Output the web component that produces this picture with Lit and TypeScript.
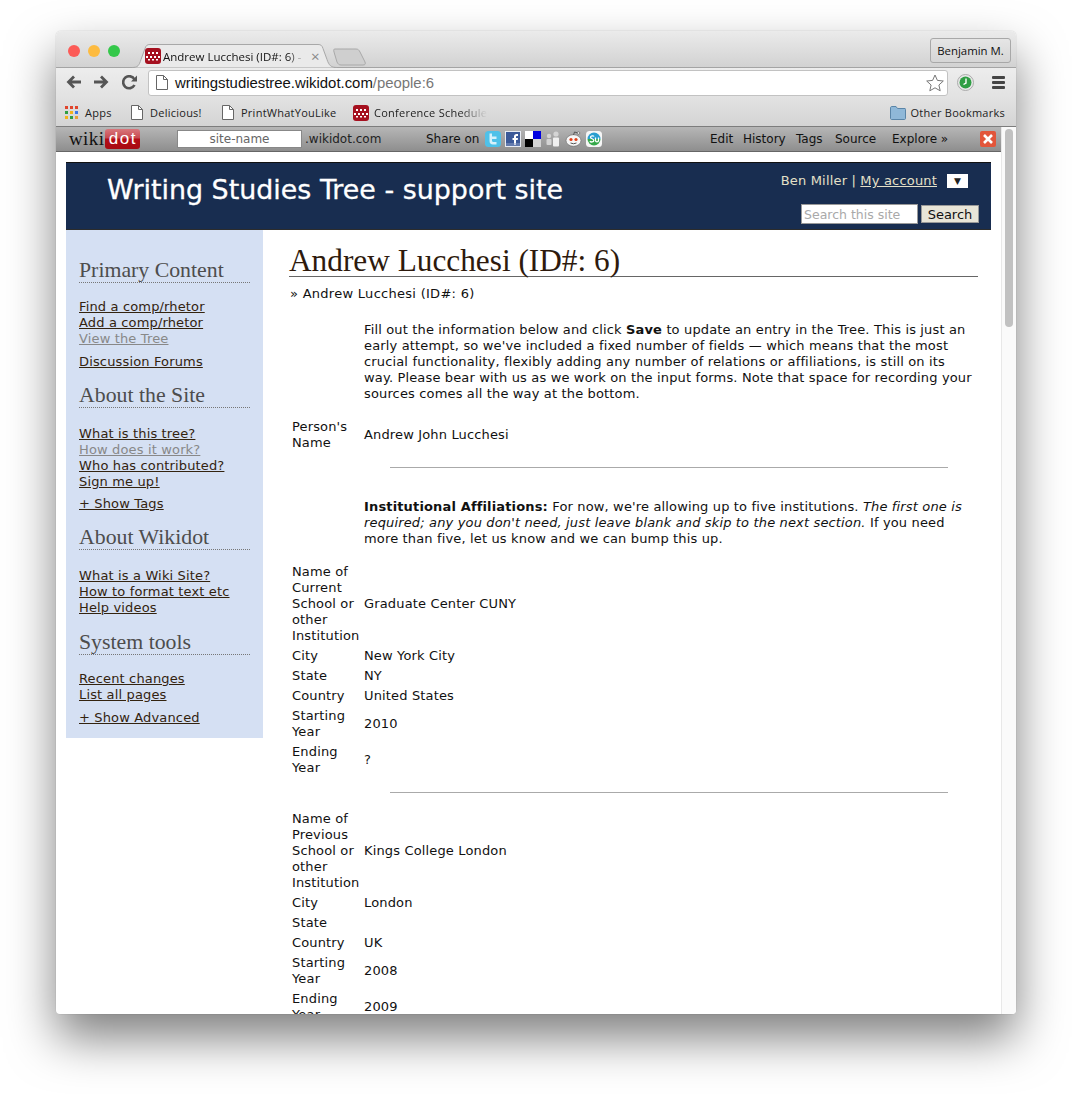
import { LitElement, css, html } from 'lit';
import { customElement } from 'lit/decorators.js';

const favicon = html`<svg class="fav" width="16" height="16" viewBox="0 0 16 16">
  <rect width="16" height="16" rx="3" fill="#a5101f" />
  <g fill="#fff">
    <rect x="3" y="4" width="2" height="2" /><rect x="7" y="4" width="2" height="2" /><rect x="11" y="4" width="2" height="2" />
    <rect x="1" y="8" width="2" height="2" /><rect x="5" y="8" width="2" height="2" /><rect x="9" y="8" width="2" height="2" /><rect x="13" y="8" width="2" height="2" />
    <rect x="3" y="11" width="2" height="1.5" /><rect x="7" y="11" width="2" height="1.5" /><rect x="11" y="11" width="2" height="1.5" />
  </g>
</svg>`;

const doc = html`<svg width="12" height="15" viewBox="0 0 12 15" fill="#fff" stroke="#666">
  <path d="M.5.5h7l4 4v10H.5z" /><path d="M7.5.5v4h4" fill="none" />
</svg>`;

const affiliations = [
  [
    ['Name of Current School or other Institution', 'Graduate Center CUNY'],
    ['City', 'New York City'],
    ['State', 'NY'],
    ['Country', 'United States'],
    ['Starting Year', '2010'],
    ['Ending Year', '?'],
  ],
  [
    ['Name of Previous School or other Institution', 'Kings College London'],
    ['City', 'London'],
    ['State', ''],
    ['Country', 'UK'],
    ['Starting Year', '2008'],
    ['Ending Year', '2009'],
  ],
];

const nav = [
  {
    title: 'Primary Content',
    groups: [['Find a comp/rhetor', 'Add a comp/rhetor', '~View the Tree'], ['Discussion Forums']],
  },
  {
    title: 'About the Site',
    groups: [['What is this tree?', '~How does it work?', 'Who has contributed?', 'Sign me up!'], ['+ Show Tags']],
  },
  { title: 'About Wikidot', groups: [['What is a Wiki Site?', 'How to format text etc', 'Help videos']] },
  { title: 'System tools', groups: [['Recent changes', 'List all pages'], ['+ Show Advanced']] },
];

@customElement('app-root')
export class AppRoot extends LitElement {
  static styles = css`
    :host {
      display: block;
      height: 1094px;
      overflow: hidden;
      background: #fff;
      padding: 31px 0 0 56px;
      box-sizing: border-box;
    }
    .window {
      width: 960px;
      height: 983px;
      border-radius: 5px 5px 4px 4px;
      overflow: hidden;
      display: flex;
      flex-direction: column;
      background: #fff;
    }
    .shadow {
      width: 960px;
      height: 983px;
      border-radius: 5px;
      box-shadow: 0 24px 48px rgba(0, 0, 0, 0.5), 0 0 1px rgba(0, 0, 0, 0.4);
    }
    .tabstrip {
      height: 37px;
      flex: none;
      box-sizing: border-box;
      display: flex;
      align-items: flex-start;
      background: linear-gradient(#ebebeb, #d2d2d2);
      border-bottom: 1px solid #a4a4a4;
      position: relative;
      font: 12px 'Open Sans', 'Noto Sans', sans-serif;
      color: #111;
    }
    .lights {
      display: flex;
      gap: 8px;
      padding: 14px 0 0 12px;
    }
    .lights i {
      width: 12px;
      height: 12px;
      border-radius: 50%;
    }
    .tab {
      position: relative;
      margin: 13px 0 0 12px;
      width: 205px;
      height: 24px;
      display: flex;
      align-items: center;
      padding-left: 13px;
      box-sizing: border-box;
      z-index: 1;
    }
    .tab > svg.shape {
      position: absolute;
      left: 0;
      top: 0;
    }
    .tab > * {
      position: relative;
    }
    .tab .fav {
      margin-right: 2px;
    }
    .tab .name {
      width: 142px;
      white-space: nowrap;
      overflow: hidden;
      font-size: 11.5px;
      -webkit-mask-image: linear-gradient(90deg, #000 88%, transparent);
      mask-image: linear-gradient(90deg, #000 88%, transparent);
    }
    .tab .x {
      color: #888;
      font-size: 15px;
      margin-left: 6px;
    }
    .newtab {
      margin: 17px 0 0 -4px;
    }
    .profile {
      margin: 7px 5px 0 auto;
      width: 81px;
      height: 25px;
      box-sizing: border-box;
      border: 1px solid #a8a8a8;
      border-radius: 3px;
      display: flex;
      align-items: center;
      justify-content: center;
      font-size: 11.4px;
      white-space: nowrap;
    }
    .toolbar {
      height: 32px;
      flex: none;
      box-sizing: border-box;
      display: flex;
      align-items: center;
      padding: 0 11px 3px 10px;
      background: linear-gradient(#ededed, #e1e1e1);
    }
    .navbtn {
      display: flex;
      gap: 13px;
      width: 82px;
    }
    .omni {
      width: 800px;
      height: 26px;
      box-sizing: border-box;
      background: #fff;
      border: 1px solid #c2c2c2;
      border-radius: 3px;
      display: flex;
      align-items: center;
      padding: 0 3px 0 7px;
      gap: 7px;
      font: 14.9px 'Liberation Sans', Arial, sans-serif;
      color: #111;
    }
    .omni .path {
      color: #777;
    }
    .omni .star {
      margin-left: auto;
    }
    .clock {
      margin-left: 9px;
    }
    .menu {
      margin-left: 18px;
      display: flex;
      flex-direction: column;
      gap: 2px;
    }
    .menu i {
      width: 13px;
      height: 3px;
      border-radius: 1px;
      background: #444;
    }
    .bookmarks {
      height: 27px;
      flex: none;
      box-sizing: border-box;
      display: flex;
      align-items: center;
      padding: 0 11px 1px 9px;
      background: linear-gradient(#e1e1e1, #d4d4d4);
      border-bottom: 1px solid #7d7d7d;
      font: 11px 'Open Sans', 'Noto Sans', sans-serif;
      letter-spacing: 0.25px;
      color: #222;
      white-space: nowrap;
    }
    .bm {
      display: flex;
      align-items: center;
      gap: 7px;
    }
    .bm.apps {
      width: 66px;
    }
    .bm.del {
      width: 91px;
    }
    .bm.print {
      width: 131px;
    }
    .bm.conf {
      width: 137px;
      gap: 5px;
      -webkit-mask-image: linear-gradient(90deg, #000 78%, transparent 98%);
      mask-image: linear-gradient(90deg, #000 78%, transparent 98%);
      overflow: hidden;
    }
    .bm.other {
      margin-left: auto;
      gap: 5px;
    }
    .appsgrid {
      display: grid;
      grid-template-columns: repeat(3, 3px);
      gap: 2px;
    }
    .appsgrid i {
      height: 3px;
    }
    .viewport {
      flex: 1;
      min-height: 0;
      display: flex;
      overflow: hidden;
    }
    .page {
      flex: 1;
      min-width: 0;
      font: 13px/16px 'DejaVu Sans', Verdana, sans-serif;
      letter-spacing: 0.15px;
      color: #111;
    }
    .scrollbar {
      width: 15px;
      flex: none;
      box-sizing: border-box;
      background: #fafafa;
      border-left: 1px solid #e8e8e8;
      padding: 2px 3px 0 3px;
    }
    .scrollbar i {
      display: block;
      width: 8px;
      height: 198px;
      border-radius: 4px;
      background: #c1c1c1;
    }
    .wbar {
      height: 25px;
      box-sizing: border-box;
      display: flex;
      align-items: center;
      background: linear-gradient(#b6b6b6, #8e8e8e);
      border-bottom: 1px solid #666;
      font-size: 12px;
      letter-spacing: 0;
      color: #111;
      white-space: nowrap;
    }
    .wlogo {
      margin-left: 13px;
      width: 108px;
      display: flex;
      align-items: center;
      font: 19px/20px 'Liberation Serif', serif;
      letter-spacing: 0.4px;
      color: #111;
    }
    .wlogo b {
      width: 35px;
      height: 20px;
      box-sizing: border-box;
      margin-left: 1px;
      text-align: center;
      font: 17px/20px 'Liberation Sans', sans-serif;
      letter-spacing: 1.5px;
      color: #fff;
      background: linear-gradient(#d8777c, #c84950 45%, #b30d16 50%, #a80a12);
      border-radius: 3px;
    }
    .siteinput {
      width: 125px;
      height: 18px;
      background: #fff;
      border: 1px solid #888;
      box-sizing: border-box;
      text-align: center;
      color: #666;
      line-height: 16px;
    }
    .domain {
      margin-left: 3px;
      width: 121px;
      color: #222;
    }
    .share {
      width: 59px;
    }
    .icons {
      display: flex;
      gap: 4px;
      width: 225px;
    }
    .wlinks {
      display: flex;
      width: 270px;
    }
    .wlinks span:nth-child(1) {
      width: 33px;
    }
    .wlinks span:nth-child(2) {
      width: 53px;
    }
    .wlinks span:nth-child(3) {
      width: 39px;
    }
    .wlinks span:nth-child(4) {
      width: 57px;
    }
    .site {
      margin: 10px 0 0 10px;
      width: 925px;
    }
    .head {
      height: 68px;
      box-sizing: border-box;
      background: #182d50;
      border-top: 1px solid #111;
      border-bottom: 1px solid #2c2c2c;
      color: #fff;
      display: flex;
      justify-content: space-between;
      padding: 0 12px 0 41px;
    }
    .head h1 {
      margin: 10px 0 0;
      font: 400 26.9px/34px 'DejaVu Sans', Verdana, sans-serif;
      letter-spacing: 0;
      -webkit-text-stroke: 0.3px #fff;
    }
    .account {
      display: flex;
      flex-direction: column;
      align-items: flex-end;
      color: #e4e0c8;
    }
    .who {
      margin: 10px 11px 0 0;
      display: flex;
      align-items: center;
      gap: 10px;
      height: 16px;
      letter-spacing: 0.18px;
    }
    .who u {
      color: #e4e0c8;
    }
    .who .drop {
      width: 21px;
      height: 14px;
      background: #fff;
      color: #222;
      font-size: 9px;
      line-height: 14px;
      text-align: center;
    }
    .search {
      display: flex;
      gap: 3px;
      margin-top: 15px;
      letter-spacing: 0;
    }
    .search .in {
      width: 117px;
      height: 20px;
      box-sizing: border-box;
      background: #fff;
      border: 1px solid #999;
      color: #a9a9a9;
      padding-left: 2px;
      font-size: 12.5px;
      line-height: 19px;
    }
    .search .btn {
      width: 58px;
      height: 18px;
      box-sizing: border-box;
      margin-top: 1px;
      background: #e8e5d8;
      border: 1px solid #999;
      color: #111;
      text-align: center;
      line-height: 17px;
    }
    .body {
      display: flex;
      align-items: flex-start;
    }
    .side {
      width: 197px;
      height: 508px;
      flex: none;
      box-sizing: border-box;
      background: #d5e0f3;
      padding: 27px 13px 0;
    }
    .side h3 {
      margin: 0 0 16px;
      font: 21.8px/26px 'Liberation Serif', Georgia, serif;
      letter-spacing: 0;
      color: #4d4d4d;
      border-bottom: 1px dotted #777;
      height: 25px;
      white-space: nowrap;
    }
    .side section {
      margin-bottom: 12px;
    }
    .side section:nth-child(2) h3,
    .side section:nth-child(3) h3 {
      margin-bottom: 18px;
    }
    .side section:nth-child(3) {
      margin-bottom: 13px;
    }
    .side .group + .group {
      margin-top: 7px;
    }
    .side section:nth-child(2) .group + .group {
      margin-top: 6px;
    }
    .side a {
      display: block;
      color: #33230f;
      text-decoration: underline;
      white-space: nowrap;
    }
    .side a.dim {
      color: #888;
    }
    .main {
      flex: 1;
      min-width: 0;
      padding: 15px 13px 0 26px;
    }
    .main h2 {
      margin: 0;
      height: 31px;
      font: 31.3px/32px 'Liberation Serif', Georgia, serif;
      letter-spacing: 0;
      color: #2e1a0d;
      border-bottom: 1px solid #666;
      white-space: nowrap;
    }
    .crumb {
      margin: 9px 0 0 1px;
      letter-spacing: 0.28px;
    }
    .note {
      margin: 20px 0 0 75px;
    }
    .note.after {
      margin-top: 31px;
    }
    .row {
      display: grid;
      grid-template-columns: 72px 1fr;
      align-items: center;
      margin-left: 3px;
    }
    .row + .row {
      margin-top: 4px;
    }
    .row .label {
      width: 70px;
    }
    .rule {
      width: 558px;
      height: 1px;
      background: #aaa;
      margin: 16px 0 18px 101px;
    }
    .gap {
      margin-top: 17px;
    }
  `;

  private twitter() {
    return html`<svg width="16" height="16" viewBox="0 0 16 16">
      <rect width="16" height="16" rx="3.500" fill="#4fc1e9" />
      <path d="M4.500 2.500h2.500v3h4.500v2.500H7v1.500c0 1 .8 1.500 2 1.500h2.500v2.500H8c-2.300 0-3.500-1.500-3.500-3.500z" fill="#d6f1fb" />
    </svg>`;
  }

  private facebook() {
    return html`<svg width="16" height="16" viewBox="0 0 16 16">
      <rect width="16" height="16" fill="#3b5998" />
      <rect x=".5" y=".5" width="15" height="15" fill="none" stroke="#e8ecf4" />
      <path d="M9 14V9H7.500V7H9V5.500C9 4 10 3 11.500 3H13v2h-1c-.7 0-1 .3-1 1v1h2l-.3 2H11v5z" fill="#fff" />
      <rect x="1" y="12" width="14" height="3" fill="#8b9dc3" opacity=".5" />
    </svg>`;
  }

  private delicious() {
    return html`<svg width="16" height="16" viewBox="0 0 16 16">
      <rect width="8" height="8" fill="#fff" /><rect x="8" width="8" height="8" fill="#0000e0" />
      <rect y="8" width="8" height="8" fill="#000" /><rect x="8" y="8" width="8" height="8" fill="#d3d3d3" />
    </svg>`;
  }

  private digg() {
    return html`<svg width="16" height="16" viewBox="0 0 16 16" fill="#d4d4d4">
      <circle cx="4" cy="5" r="2.200" /><circle cx="11" cy="3" r="2.600" />
      <rect x="1.500" y="8" width="5" height="6" rx="1" /><rect x="8" y="6.500" width="6" height="9" rx="1" fill="#f0f0f0" />
    </svg>`;
  }

  private reddit() {
    return html`<svg width="17" height="16" viewBox="0 0 17 16">
      <ellipse cx="8.500" cy="9.500" rx="7.500" ry="5.800" fill="#f6f6f6" stroke="#666" stroke-width=".6" />
      <circle cx="6" cy="8.500" r="1.600" fill="#e0401a" /><circle cx="11" cy="8.500" r="1.600" fill="#e0401a" />
      <path d="M5.500 12q3 1.500 6 0M8.500 4l1-3 3.500 1" stroke="#555" fill="none" />
      <circle cx="13.500" cy="2" r="1.300" fill="#eee" stroke="#555" stroke-width=".6" />
    </svg>`;
  }

  private stumble() {
    return html`<svg width="16" height="16" viewBox="0 0 16 16">
      <rect width="16" height="16" rx="3.500" fill="#f6f6f6" />
      <path d="M1.500 8a6.500 6.500 0 0 1 13 0z" fill="#2a9fd0" />
      <path d="M1.500 8h13a6.500 6.500 0 0 1-13 0z" fill="#35a84a" />
      <path d="M8 5.500C7.500 4.500 4.500 4.500 4.500 6.300 4.500 8 7.800 7.500 7.800 9.500c0 1.800-3 1.800-4 .8" fill="none" stroke="#fff" stroke-width="1.300" />
      <path d="M9.500 6.500v3c0 1.800 3 1.800 3 0v-3" fill="none" stroke="#fff" stroke-width="1.300" />
    </svg>`;
  }

  private renderRow(row: string[]) {
    return html`<div class="row"><div class="label">${row[0]}</div><div>${row[1]}</div></div>`;
  }

  protected render() {
    return html`
      <div class="shadow">
        <div class="window">
          <div class="tabstrip">
            <div class="lights">
              <i style="background:#fc5b57"></i><i style="background:#fdbb40"></i><i style="background:#34c84a"></i>
            </div>
            <div class="tab">
              <svg class="shape" width="205" height="24" viewBox="0 0 205 24">
                <path d="M0 23.500c6 0 7-2 9-8l4-11c1-3 2-4 5-4h168c3 0 4 1 5 4l4 11c2 6 4 8 10 8"
                  fill="#eaeaea" stroke="#a8a8a8" />
              </svg>
              ${favicon}
              <span class="name">Andrew Lucchesi (ID#: 6) - Writing Studies</span>
              <span class="x">×</span>
            </div>
            <svg class="newtab" width="34" height="18" viewBox="0 0 34 18">
              <path d="M2 1h21c2 0 3 1 4 3l5 10c.8 2 0 3-2 3H8c-2 0-3-1-4-3L1 4C.5 2 .5 1 2 1z"
                fill="#cfcfcf" stroke="#a8a8a8" />
            </svg>
            <div class="profile">Benjamin M.</div>
          </div>

          <div class="toolbar">
            <div class="navbtn">
              <svg width="15" height="14" viewBox="0 0 15 14" fill="none" stroke="#555" stroke-width="2.800">
                <path d="M15 7H2.500M8 1.500 2.500 7 8 12.500" />
              </svg>
              <svg width="15" height="14" viewBox="0 0 15 14" fill="none" stroke="#555" stroke-width="2.800">
                <path d="M0 7h12.500M7 1.500 12.500 7 7 12.500" />
              </svg>
              <svg width="15" height="15" viewBox="0 0 15 15" fill="none" stroke="#555" stroke-width="2.600">
                <path d="M12.500 10a6 6 0 1 1 0-5.500" /><path d="M15 .5v6H9z" fill="#555" stroke="none" />
              </svg>
            </div>
            <div class="omni">
              ${doc}
              <span>writingstudiestree.wikidot.com<span class="path">/people:6</span></span>
              <svg class="star" width="18" height="18" viewBox="0 0 18 18" fill="#fff" stroke="#777">
                <path d="m9 1 2.400 5.400 5.900.6-4.400 4 1.300 5.800L9 13.800l-5.200 3 1.300-5.800-4.400-4 5.900-.6z" />
              </svg>
            </div>
            <svg class="clock" width="17" height="17" viewBox="0 0 17 17">
              <circle cx="8.500" cy="8.500" r="8" fill="#e8e8e8" stroke="#aaa" />
              <circle cx="8.500" cy="8.500" r="6" fill="#2f9e44" />
              <path d="M9 4.500V9L6.500 10.500" fill="none" stroke="#fff" stroke-width="1.400" />
            </svg>
            <div class="menu"><i></i><i></i><i></i></div>
          </div>

          <div class="bookmarks">
            <div class="bm apps">
              <span class="appsgrid">
                <i style="background:#e0452c"></i><i style="background:#e0452c"></i><i style="background:#e0452c"></i>
                <i style="background:#2f9e44"></i><i style="background:#f3b21a"></i><i style="background:#3b78e7"></i>
                <i style="background:#f3b21a"></i><i style="background:#2f9e44"></i><i style="background:#e8a03a"></i>
              </span>
              <span>Apps</span>
            </div>
            <div class="bm del">${doc}<span>Delicious!</span></div>
            <div class="bm print">${doc}<span>PrintWhatYouLike</span></div>
            <div class="bm conf">${favicon}<span>Conference Schedule</span></div>
            <div class="bm other">
              <svg width="16" height="14" viewBox="0 0 16 14">
                <path d="M.5 2c0-1 .5-1.500 1.500-1.500h4L7.500 2.500H15c.5 0 .5.500.5 1v9c0 .5-.5 1-1 1h-13c-.5 0-1-.5-1-1z"
                  fill="#8fb8d8" stroke="#5a85a8" />
              </svg>
              <span>Other Bookmarks</span>
            </div>
          </div>

          <div class="viewport">
            <div class="page">
              <div class="wbar">
                <div class="wlogo">wiki<b>dot</b></div>
                <div class="siteinput">site-name</div>
                <div class="domain">.wikidot.com</div>
                <div class="share">Share on</div>
                <div class="icons">
                  ${this.twitter()}${this.facebook()}${this.delicious()}${this.digg()}${this.reddit()}${this.stumble()}
                </div>
                <div class="wlinks">
                  <span>Edit</span><span>History</span><span>Tags</span><span>Source</span><span>Explore »</span>
                </div>
                <svg width="16" height="16" viewBox="0 0 16 16">
                  <rect width="16" height="16" rx="2" fill="#e2553a" />
                  <path d="m4 4 8 8M12 4l-8 8" stroke="#fff" stroke-width="2.600" />
                </svg>
              </div>

              <div class="site">
                <div class="head">
                  <h1>Writing Studies Tree - support site</h1>
                  <div class="account">
                    <div class="who">
                      <span>Ben Miller | <u>My account</u></span><span class="drop">▼</span>
                    </div>
                    <div class="search">
                      <div class="in">Search this site</div>
                      <div class="btn">Search</div>
                    </div>
                  </div>
                </div>
                <div class="body">
                  <div class="side">
                    ${nav.map(
                      (s) => html`<section>
                        <h3>${s.title}</h3>
                        ${s.groups.map(
                          (g) => html`<div class="group">
                            ${g.map((l) =>
                              l.startsWith('~')
                                ? html`<a class="dim">${l.slice(1)}</a>`
                                : html`<a>${l}</a>`
                            )}
                          </div>`
                        )}
                      </section>`
                    )}
                  </div>
                  <div class="main">
                    <h2>Andrew Lucchesi (ID#: 6)</h2>
                    <div class="crumb">» Andrew Lucchesi (ID#: 6)</div>
                    <div class="note">
                      Fill out the information below and click <b>Save</b> to update an entry in the Tree. This is just an
                      early attempt, so we've included a fixed number of fields — which means that the most
                      crucial functionality, flexibly adding any number of relations or affiliations, is still on its
                      way. Please bear with us as we work on the input forms. Note that space for recording your
                      sources comes all the way at the bottom.
                    </div>
                    <div class="gap">${this.renderRow(["Person's Name", 'Andrew John Lucchesi'])}</div>
                    <div class="rule"></div>
                    <div class="note after">
                      <b>Institutional Affiliations:</b> For now, we're allowing up to five institutions.
                      <i>The first one is required; any you don't need, just leave blank and skip to the next section.</i>
                      If you need more than five, let us know and we can bump this up.
                    </div>
                    <div class="gap">${affiliations[0].map((r) => this.renderRow(r))}</div>
                    <div class="rule"></div>
                    <div>${affiliations[1].map((r) => this.renderRow(r))}</div>
                  </div>
                </div>
              </div>
            </div>
            <div class="scrollbar"><i></i></div>
          </div>
        </div>
      </div>
    `;
  }
}
